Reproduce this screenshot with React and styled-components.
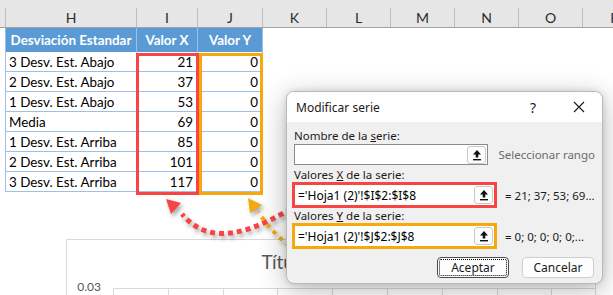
import styled, { createGlobalStyle } from "styled-components";

const GlobalStyle = createGlobalStyle`
  html, body {
    margin: 0;
    padding: 0;
    background: #ffffff;
    overflow: hidden;
  }
`;

const Page = styled.div`
  position: relative;
  width: 613px;
  height: 295px;
  overflow: hidden;
  background: #ffffff;
  font-family: Lato, "Liberation Sans", sans-serif;
`;

const ColumnBar = styled.div`
  display: flex;
  height: 28px;
  padding-left: 5px;
  background: #e6e6e6;
  border-bottom: 1px solid #a3a3a3;
  box-sizing: border-box;
`;

const ColumnHead = styled.div`
  width: ${(p) => p.$w}px;
  flex: none;
  align-self: flex-end;
  height: 19px;
  border-left: 1px solid #bdbdbd;
  box-sizing: border-box;
  display: flex;
  align-items: center;
  justify-content: center;
  font-size: 14px;
  color: #2b2b2b;
`;

const Table = styled.div`
  display: grid;
  grid-template-columns: 131px 61px 65px;
  margin-left: 5px;
  width: 257px;
  border-left: 1px solid #9bc2e6;
  box-sizing: border-box;
`;

const HeadCell = styled.div`
  height: 24px;
  background: #5b9bd5;
  color: #ffffff;
  font-weight: 700;
  font-size: 13.4px;
  white-space: nowrap;
  display: flex;
  align-items: center;
  justify-content: center;
  border-right: 1px solid #9bc2e6;
  box-sizing: border-box;
`;

const Cell = styled.div`
  height: 20px;
  font-size: 13.4px;
  color: #000000;
  white-space: nowrap;
  display: flex;
  align-items: center;
  padding-top: 1px;
  justify-content: ${(p) => (p.$num ? "flex-end" : "flex-start")};
  padding-right: ${(p) => (p.$num ? 4 : 0)}px;
  padding-left: ${(p) => (p.$num ? 0 : 3)}px;
  border-right: 1px solid #9bc2e6;
  border-bottom: 1px solid #9bc2e6;
  box-sizing: border-box;
`;

const Frame = styled.div`
  position: absolute;
  left: ${(p) => p.$x}px;
  top: ${(p) => p.$y}px;
  width: ${(p) => p.$w}px;
  height: ${(p) => p.$h}px;
  border: 3px solid ${(p) => p.$color};
  box-sizing: border-box;
  z-index: 2;
`;

const Chart = styled.div`
  position: absolute;
  left: 66px;
  top: 239px;
  width: 530px;
  height: 90px;
  border: 1px solid #d9d9d9;
  background: #ffffff;
  box-sizing: border-box;
  font-family: Lato, "Liberation Sans", sans-serif;
  color: #595959;
`;

const ChartTitle = styled.div`
  text-align: center;
  font-size: 19px;
  margin-top: 9px;
  height: 25px;
  line-height: 25px;
`;

const PlotRow = styled.div`
  display: flex;
  margin-top: 14px;
`;

const AxisLabel = styled.div`
  width: 46px;
  text-align: right;
  padding-right: 12px;
  box-sizing: border-box;
  font-size: 12px;
  line-height: 14px;
  margin-top: -8px;
`;

const PlotArea = styled.div`
  flex: 1;
  height: 40px;
  border-top: 1px solid #d9d9d9;
  background-image: repeating-linear-gradient(
    to right,
    #d9d9d9 0,
    #d9d9d9 1px,
    transparent 1px,
    transparent 54.8px
  );
`;

const Arrows = styled.svg`
  position: absolute;
  left: 0;
  top: 0;
  z-index: 3;
  pointer-events: none;
  filter: drop-shadow(2px 3px 2px rgba(0, 0, 0, 0.35));
`;

const Dialog = styled.div`
  position: absolute;
  left: 286px;
  top: 91px;
  width: 317px;
  height: 193px;
  border: 1px solid #b9b9b9;
  border-radius: 8px;
  overflow: hidden;
  box-sizing: border-box;
  background: #f0f0f0;
  box-shadow: 0 6px 28px rgba(0, 0, 0, 0.28), 0 0 6px rgba(0, 0, 0, 0.12);
  z-index: 4;
  font-family: "Noto Sans", "Liberation Sans", sans-serif;
  font-size: 11.5px;
  color: #1a1a1a;
`;

const TitleBar = styled.div`
  height: 30px;
  background: #ffffff;
  display: flex;
  align-items: center;
  padding: 0 0 0 9px;
  font-size: 12px;
`;

const TitleText = styled.span`
  flex: 1;
`;

const TitleButton = styled.span`
  width: 46px;
  height: 30px;
  display: flex;
  align-items: center;
  justify-content: center;
  font-size: 14px;
  color: #1a1a1a;
`;

const Body = styled.div`
  display: flex;
  flex-direction: column;
  padding: 6px 7px 0 7px;
`;

const Label = styled.div`
  height: 14px;
  line-height: 14px;
  margin-top: ${(p) => p.$mt || 0}px;
  white-space: nowrap;
`;

const U = styled.span`
  text-decoration: underline;
`;

const FieldRow = styled.div`
  display: flex;
  align-items: center;
  margin-top: ${(p) => p.$mt || 0}px;
  margin-left: ${(p) => (p.$framed ? -2 : 0)}px;
`;

const FieldBox = styled.div`
  width: ${(p) => (p.$framed ? 205 : 200)}px;
  height: ${(p) => (p.$framed ? 26 : 21)}px;
  border: ${(p) => (p.$framed ? `3px solid ${p.$color}` : "1px solid #8a8a8a")};
  box-sizing: border-box;
  background: #ffffff;
  display: flex;
  align-items: center;
  padding-left: 3px;
  padding-right: 1px;
`;

const FieldText = styled.span`
  flex: 1;
  white-space: nowrap;
  font-size: 12px;
  color: #000000;
`;

const RangeButton = styled.div`
  width: 19px;
  height: 18px;
  border: 1px solid #c9c9c9;
  border-radius: 3px;
  background: #fdfdfd;
  box-sizing: border-box;
  display: flex;
  align-items: center;
  justify-content: center;
`;

const SideText = styled.span`
  margin-left: ${(p) => (p.$framed ? 8 : 10)}px;
  white-space: nowrap;
  color: ${(p) => (p.$muted ? "#6b6b6b" : "#1a1a1a")};
`;

const Buttons = styled.div`
  display: flex;
  justify-content: flex-end;
  gap: 13px;
  margin-top: 8px;
  margin-right: 1px;
`;

const Button = styled.div`
  width: ${(p) => p.$w}px;
  height: 21px;
  box-sizing: border-box;
  border: 1px solid #cfcfcf;
  border-radius: 4px;
  background: #fdfdfd;
  display: flex;
  align-items: center;
  justify-content: center;
  font-size: 12px;
  position: relative;
  ${(p) =>
    p.$focus &&
    `
    border-color: #4a4a4a;
    &::after {
      content: "";
      position: absolute;
      inset: 1px;
      border: 1px dotted #000;
      border-radius: 2px;
    }
  `}
`;

const UpArrow = () => (
  <svg width="10" height="12" viewBox="0 0 10 12">
    <path d="M5 1 L9 5.5 L6.3 5.5 L6.3 8.5 L3.7 8.5 L3.7 5.5 L1 5.5 Z" fill="#111" />
    <rect x="1" y="10" width="8" height="1.4" fill="#111" />
  </svg>
);

const CloseIcon = () => (
  <svg width="12" height="12" viewBox="0 0 12 12">
    <path d="M1 1 L11 11 M11 1 L1 11" stroke="#1a1a1a" strokeWidth="1.1" />
  </svg>
);

const columns = [
  ["H", 131],
  ["I", 61],
  ["J", 65],
  ["K", 64],
  ["L", 64],
  ["M", 64],
  ["N", 64],
  ["O", 64],
  ["P", 64],
];

const rows = [
  ["3 Desv. Est. Abajo", 21],
  ["2 Desv. Est. Abajo", 37],
  ["1 Desv. Est. Abajo", 53],
  ["Media", 69],
  ["1 Desv. Est. Arriba", 85],
  ["2 Desv. Est. Arriba", 101],
  ["3 Desv. Est. Arriba", 117],
];

const RED = "#f84444";
const ORANGE = "#f6a90c";

const SeriesField = ({ value, color, result }) => (
  <FieldRow $framed $mt={0}>
    <FieldBox $framed $color={color}>
      <FieldText>{value}</FieldText>
      <RangeButton>
        <UpArrow />
      </RangeButton>
    </FieldBox>
    <SideText $framed>{result}</SideText>
  </FieldRow>
);

export default function App() {
  return (
    <Page>
      <GlobalStyle />
      <ColumnBar>
        {columns.map(([name, w]) => (
          <ColumnHead key={name} $w={w}>
            {name}
          </ColumnHead>
        ))}
      </ColumnBar>

      <Table>
        <HeadCell>Desviación Estandar</HeadCell>
        <HeadCell>Valor X</HeadCell>
        <HeadCell>Valor Y</HeadCell>
        {rows.map(([label, x]) => [
          <Cell key={label + "a"}>{label}</Cell>,
          <Cell key={label + "b"} $num>
            {x}
          </Cell>,
          <Cell key={label + "c"} $num>
            0
          </Cell>,
        ])}
      </Table>

      <Frame $x={136} $y={53} $w={63} $h={142} $color={RED} />
      <Frame $x={199} $y={53} $w={64} $h={142} $color={ORANGE} />

      <Chart>
        <ChartTitle>Título del gráfico</ChartTitle>
        <PlotRow>
          <AxisLabel>0.03</AxisLabel>
          <PlotArea />
        </PlotRow>
      </Chart>

      <Arrows width="613" height="295" viewBox="0 0 613 295">
        <path
          d="M291 209 C255 229 212 250 182 214"
          fill="none"
          stroke={RED}
          strokeWidth="5"
          strokeDasharray="5 4"
        />
        <path d="M166 199 L181 203 L171 214 Z" fill={RED} />
        <path
          d="M289 246 Q272 232 258 212"
          fill="none"
          stroke={ORANGE}
          strokeWidth="4"
          strokeDasharray="4 5"
        />
        <path d="M248 198 L262 205 L250 213 Z" fill={ORANGE} />
      </Arrows>

      <Dialog>
        <TitleBar>
          <TitleText>Modificar serie</TitleText>
          <TitleButton>?</TitleButton>
          <TitleButton>
            <CloseIcon />
          </TitleButton>
        </TitleBar>
        <Body>
          <Label $mt={1}>
            Nombre de la <U>s</U>erie:
          </Label>
          <FieldRow $mt={1}>
            <FieldBox>
              <FieldText />
              <RangeButton>
                <UpArrow />
              </RangeButton>
            </FieldBox>
            <SideText $muted>Seleccionar rango</SideText>
          </FieldRow>
          <Label $mt={3}>
            Valores <U>X</U> de la serie:
          </Label>
          <SeriesField
            value="='Hoja1 (2)'!$I$2:$I$8"
            color={RED}
            result="= 21; 37; 53; 69..."
          />
          <Label $mt={1}>
            Valores <U>Y</U> de la serie:
          </Label>
          <SeriesField
            value="='Hoja1 (2)'!$J$2:$J$8"
            color={ORANGE}
            result="= 0; 0; 0; 0; 0;..."
          />
          <Buttons>
            <Button $w={72} $focus>
              Aceptar
            </Button>
            <Button $w={72}>Cancelar</Button>
          </Buttons>
        </Body>
      </Dialog>
    </Page>
  );
}
